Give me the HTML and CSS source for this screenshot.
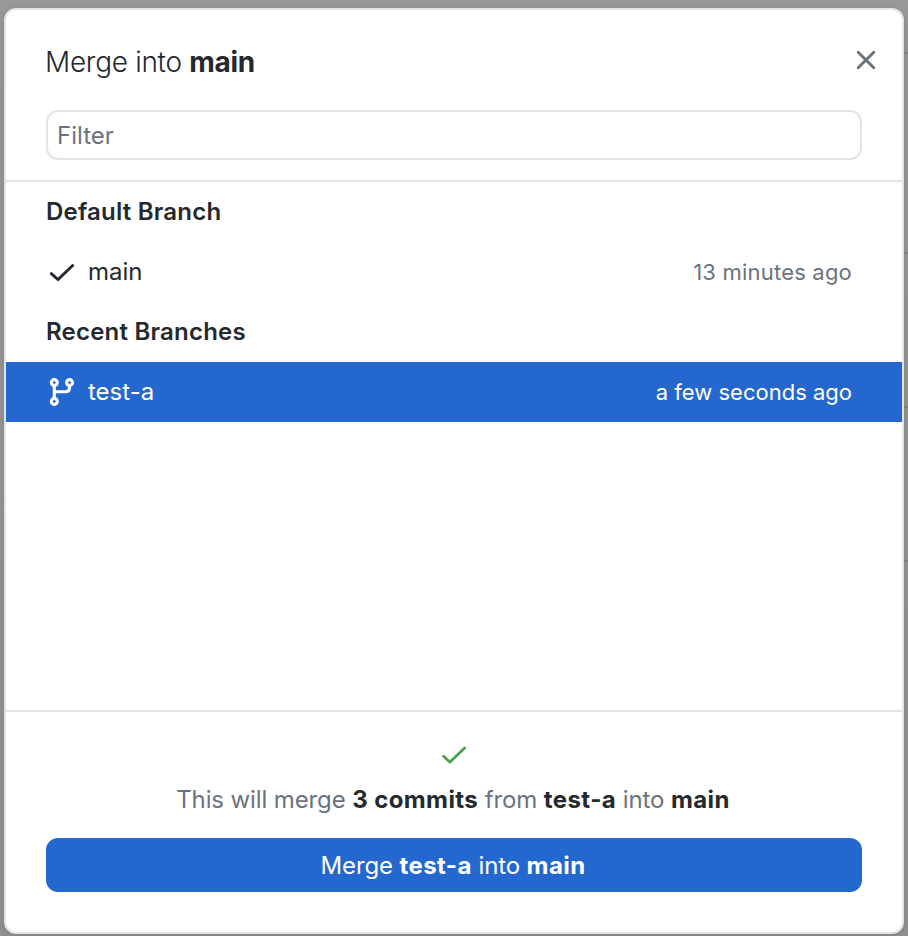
FILE: index.html
```html
<!DOCTYPE html>
<html lang="en">
<head>
<meta charset="utf-8">
<title>Merge into main</title>
<link rel="stylesheet" href="styles.css">
</head>
<body>
<main class="dialog">
  <header class="dialog-header">
    <div class="title-row">
      <h1 class="title">Merge into <strong>main</strong></h1>
      <button class="close" aria-label="Close">
        <svg width="20" height="20" viewBox="0 0 20 20"><path d="M2.2 2.2l15.6 15.6M17.8 2.2L2.2 17.8"/></svg>
      </button>
    </div>
    <input class="filter" type="text" placeholder="Filter">
  </header>
  <section class="branches">
    <h2 class="group">Default Branch</h2>
    <div class="row">
      <svg class="icon" width="28" height="32" viewBox="0 0 28 32"><path d="M3.3 17.6l6.7 5.9L24.7 9.5" stroke-width="2.9"/></svg>
      <span class="name">main</span>
      <span class="time">13 minutes ago</span>
    </div>
    <h2 class="group">Recent Branches</h2>
    <div class="row selected">
      <svg class="icon" width="28" height="32" viewBox="0 0 28 32"><g stroke-width="3.1"><circle cx="6.3" cy="6.6" r="3"/><circle cx="21.5" cy="6.6" r="3"/><circle cx="6.3" cy="25.4" r="3"/><path d="M6.3 9.6v12.8M6.3 15.7h11.2q4 0 4-4v-2"/></g></svg>
      <span class="name">test-a</span>
      <span class="time">a few seconds ago</span>
    </div>
  </section>
  <footer class="dialog-footer">
    <svg class="status" width="28" height="28" viewBox="0 0 28 28"><path d="M3.5 16.2l6.4 5.8L24.7 8"/></svg>
    <p class="summary">This will merge <strong>3 commits</strong> from <strong>test-a</strong> into <strong>main</strong></p>
    <button class="merge">Merge <strong>test-a</strong> into <strong>main</strong></button>
  </footer>
</main>
</body>
</html>
```
FILE: styles.css
```css
* { box-sizing: border-box; }
body {
  margin: 0;
  height: 936px;
  padding: 8px 4px 2px;
  overflow: hidden;
  background:
    linear-gradient(#858585, #858585) 904px 52px / 4px 2px no-repeat,
    linear-gradient(#858585, #858585) 904px 252px / 4px 2px no-repeat,
    linear-gradient(#858585, #858585) 904px 406px / 4px 2px no-repeat,
    linear-gradient(#858585, #858585) 904px 560px / 4px 2px no-repeat,
    linear-gradient(#999, #929292);
  font-family: Inter, "Liberation Sans", sans-serif;
  font-size: 24px;
  color: #24292e;
}
h1, h2, p { margin: 0; }
strong { font-weight: 700; color: #24292e; }
button { padding: 0; border: 0; font: inherit; }
svg { display: block; flex: none; fill: none; stroke: currentColor; stroke-linecap: round; }
.dialog {
  display: flex;
  flex-direction: column;
  height: 926px;
  border: 2px solid #e1e4e8;
  border-radius: 12px;
  background: #fff;
  box-shadow: 0 2px 8px #0002;
  overflow: hidden;
}
.dialog-header {
  height: 172px;
  padding: 30px 40px 20px;
  border-bottom: 2px solid #e1e4e8;
}
.title-row { display: flex; justify-content: space-between; height: 70px; margin: 0 -14px 0 -1px; }
.title { font-size: 28px; line-height: 44px; font-weight: 300; letter-spacing: -0.3px; white-space: nowrap; }
.close { height: 40px; background: none; color: #6a737d; display: flex; align-items: center; }
.close svg { stroke-width: 2.9; }
.filter {
  display: block;
  width: 816px;
  height: 50px;
  padding: 0 9px;
  border: 2px solid #e1e4e8;
  border-radius: 12px;
  background: #fff;
  font: inherit;
}
.filter::placeholder { color: #6a737d; opacity: 1; }
.branches { flex: 1; }
.group, .row { height: 60px; line-height: 60px; padding: 0 50px 0 40px; white-space: nowrap; }
.group { font-size: 24px; font-weight: 600; letter-spacing: 0.22px; }
.row { display: flex; align-items: center; }
.icon { margin: 0 12px 0 2px; }
.time { margin-left: auto; font-size: 22px; letter-spacing: 0.2px; color: #6a737d; }
.selected { background: #2468cf; color: #fff; }
.selected .time { color: #fff; letter-spacing: 0; }
.dialog-footer {
  display: flex;
  flex-direction: column;
  align-items: center;
  height: 222px;
  padding: 28px 40px 40px;
  border-top: 2px solid #e1e4e8;
}
.status { color: #4ca24c; stroke-width: 2.8; }
.summary, .merge { letter-spacing: -0.12px; white-space: nowrap; }
.summary strong, .merge strong { letter-spacing: 0.4px; }
.summary { height: 70px; padding: 16px 2px 0 0; line-height: 32px; color: #6a737d; }
.merge { width: 816px; height: 54px; padding-right: 2px; border-radius: 12px; background: #2468cf; color: #fff; }
.merge strong { color: #fff; }
```
